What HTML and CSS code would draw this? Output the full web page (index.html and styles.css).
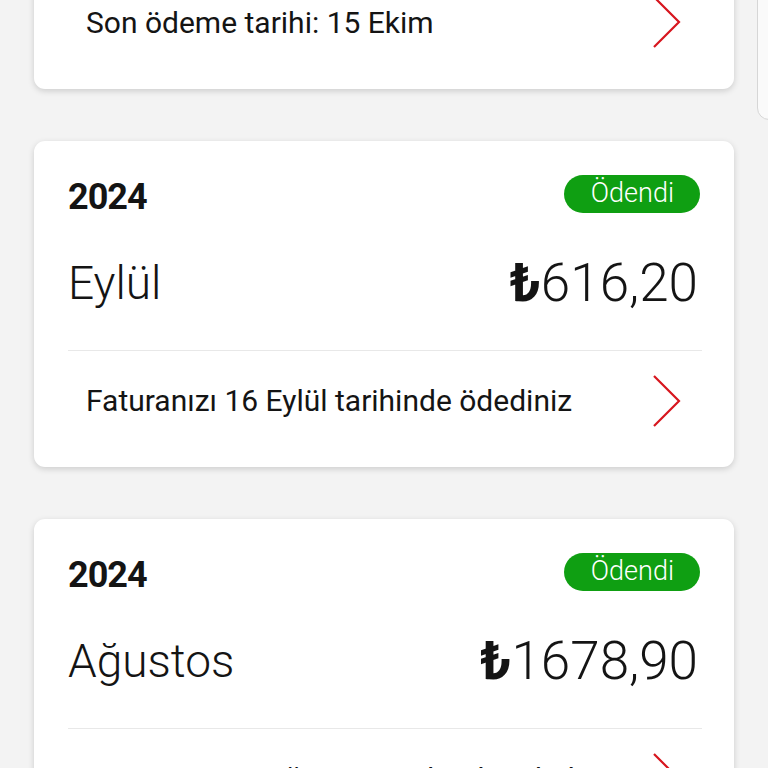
FILE: index.html
```
<!DOCTYPE html>
<html>
<head>
	<title>Faturalarım</title>
	<meta charset="utf-8">
	<link rel="stylesheet" href="styles.css">
</head>
<body>
	<!--bill list start-->
	<div class="bills">
		<div class="bill bill_cut">
			<div class="b_foot">
				<span class="b_note">Son ödeme tarihi: 15 Ekim</span>
				<svg class="b_arrow" width="28" height="52" viewBox="0 0 28 52"><polyline points="1,1 26,26 1,51" fill="none" stroke="#d7161e" stroke-width="2.2"/></svg>
			</div>
		</div>

		<div class="bill">
			<div class="b_head">
				<span class="b_year">2024</span>
				<span class="b_state">Ödendi</span>
			</div>
			<div class="b_main">
				<span class="b_month">Eylül</span>
				<span class="b_sum"><b>₺</b>616,20</span>
			</div>
			<div class="b_foot">
				<span class="b_note">Faturanızı 16 Eylül tarihinde ödediniz</span>
				<svg class="b_arrow" width="28" height="52" viewBox="0 0 28 52"><polyline points="1,1 26,26 1,51" fill="none" stroke="#d7161e" stroke-width="2.2"/></svg>
			</div>
		</div>

		<div class="bill">
			<div class="b_head">
				<span class="b_year">2024</span>
				<span class="b_state">Ödendi</span>
			</div>
			<div class="b_main">
				<span class="b_month">Ağustos</span>
				<span class="b_sum"><b>₺</b>1678,90</span>
			</div>
			<div class="b_foot">
				<span class="b_note">Faturanızı 16 Ağustos tarihinde ödediniz</span>
				<svg class="b_arrow" width="28" height="52" viewBox="0 0 28 52"><polyline points="1,1 26,26 1,51" fill="none" stroke="#d7161e" stroke-width="2.2"/></svg>
			</div>
		</div>
	</div>
	<!--end bill list-->

	<div class="scroll_thumb"></div>
</body>
</html>
```
FILE: styles.css
```
*{margin:0;padding:0;box-sizing:border-box;}
html,body{height:100%;overflow:hidden;}
body{background:#f3f3f3;font-family:Roboto,"Noto Sans",sans-serif;color:#141414;position:relative;}
/*bill list start*/
.bills{display:flex;flex-direction:column;gap:52px;width:700px;margin:-28px 0 0 34px;}
.bill{background:#fff;border-radius:11px;box-shadow:0 2px 6px rgba(0,0,0,0.16);padding:34px 32px 17px 34px;}
.bill.bill_cut{padding-top:0;}
.bill.bill_cut .b_foot{border-top:none;}
.b_head{display:flex;justify-content:space-between;align-items:center;height:38px;}
.b_year{font-size:36px;font-weight:700;letter-spacing:-1px;padding-top:6px;}
.b_state{background:#0f9f12;color:#fff;font-size:27px;font-weight:300;height:38px;line-height:36px;padding:0 26px 0 27px;border-radius:19px;margin-right:2px;}
.b_main{display:flex;justify-content:space-between;align-items:center;height:60px;margin:40px 0 37px;}
.b_month{font-size:46px;font-weight:300;}
.b_sum{font-size:53px;font-weight:300;margin-right:4px;}
.b_sum b{font-weight:700;}
.b_foot{display:flex;justify-content:space-between;align-items:center;height:100px;border-top:1px solid #e8e8e8;padding:0 21px 0 18px;}
.b_note{font-size:30px;}
/*end bill list*/
.scroll_thumb{position:absolute;left:757px;top:-20px;width:30px;height:140px;background:#fafafa;border:1px solid #d6d6d6;border-radius:12px;}
```
